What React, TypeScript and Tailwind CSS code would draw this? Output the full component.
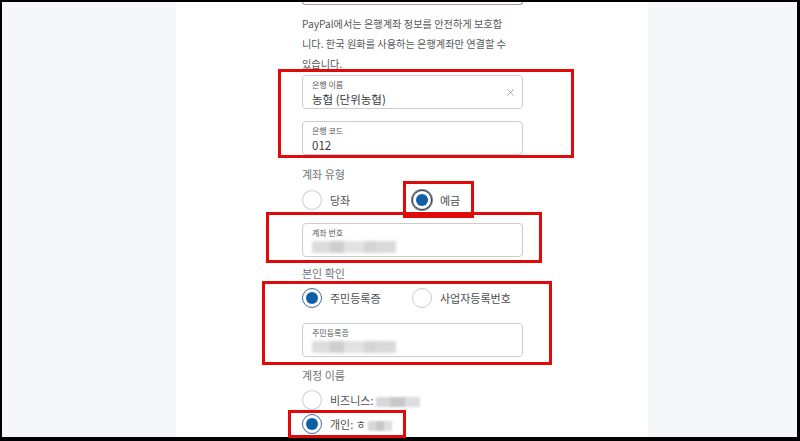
import React from "react";

const font = { fontFamily: '"Noto Sans CJK KR", "Noto Sans", sans-serif' };

function Field({ label, value, clear }: { label: string; value?: string; clear?: boolean }) {
  return (
    <div className="relative w-[221px] h-[34px] rounded-[4px] border border-[#c9cccf] bg-white pl-[9px] pt-[4px]">
      <div className="text-[8px] leading-[10px] text-[#555]">{label}</div>
      {value ? (
        <div className="mt-[2px] text-[11.5px] leading-[14px] text-[#3a3c3e]">{value}</div>
      ) : (
        <Blur />
      )}
      {clear && (
        <svg className="absolute right-[8px] top-[13px]" width="7" height="7" viewBox="0 0 7 7">
          <path d="M0.5 0.5L6.5 6.5M6.5 0.5L0.5 6.5" stroke="#9aa0a4" strokeWidth="0.9" />
        </svg>
      )}
    </div>
  );
}

function Blur() {
  return (
    <div className="mt-[3px] flex h-[12px] w-[84px] blur-[1.5px]">
      <div className="w-[18px] bg-[#dcdcdc]" />
      <div className="w-[14px] bg-[#cecece]" />
      <div className="w-[20px] bg-[#e2e2e2]" />
      <div className="w-[12px] bg-[#d4d4d4]" />
      <div className="w-[20px] bg-[#dadada]" />
    </div>
  );
}

function Radio({ checked, dark }: { checked?: boolean; dark?: boolean }) {
  if (!checked)
    return <div className="h-[20px] w-[20px] shrink-0 rounded-full border border-[#c7c9cc] bg-white" />;
  return (
    <div
      className={
        "flex h-[20px] w-[20px] shrink-0 items-center justify-center rounded-full border-[1.5px] bg-white " +
        (dark ? "border-[#2b3542] shadow-[0_0_0_1px_#7d8590]" : "border-[#3a6fa3]")
      }
    >
      <div className="h-[12px] w-[12px] rounded-full bg-[#0f5fa8]" />
    </div>
  );
}

function Option({ checked, dark, children }: { checked?: boolean; dark?: boolean; children: React.ReactNode }) {
  return (
    <div className="flex w-[110px] items-center gap-[8px]">
      <Radio checked={checked} dark={dark} />
      <span className="text-[11px] leading-[14px] text-[#4d4f51]">{children}</span>
    </div>
  );
}

function SmallBlur({ w }: { w: number }) {
  return (
    <span className="ml-[2px] inline-flex h-[10px] blur-[1px] align-middle" style={{ width: w }}>
      <span className="flex-1 bg-[#d8d8d8]" />
      <span className="flex-1 bg-[#c8c8c8]" />
      <span className="flex-1 bg-[#dedede]" />
    </span>
  );
}

export default function App() {
  return (
    <div className="relative h-[441px] w-[800px] bg-black pb-[4px] pl-[2px] pr-[3px] pt-[2px]" style={font}>
      <div className="flex h-full w-full">
        <div className="w-[174px] bg-[#f5f7fa]" />
        <div className="w-[472px] bg-white pl-[126px]">
          <div className="h-[3px] w-[221px] rounded-b-[4px] border border-t-0 border-[#b59597]" />
          <p className="mt-[9px] text-[10.2px] leading-[20px] text-[#555859]">
            PayPal에서는 은행계좌 정보를 안전하게 보호합
            <br />
            니다. 한국 원화를 사용하는 은행계좌만 연결할 수
            <br />
            있습니다.
          </p>
          <div className="mt-[1px]">
            <Field label="은행 이름" value="농협 (단위농협)" clear />
          </div>
          <div className="mt-[12px]">
            <Field label="은행 코드" value="012" />
          </div>
          <div className="mt-[12px] text-[11px] leading-[14px] text-[#6c7378]">계좌 유형</div>
          <div className="mt-[9px] flex">
            <Option>당좌</Option>
            <Option checked dark>
              예금
            </Option>
          </div>
          <div className="mt-[13px]">
            <Field label="계좌 번호" />
          </div>
          <div className="mt-[9px] text-[11px] leading-[14px] text-[#6c7378]">본인 확인</div>
          <div className="mt-[8px] flex">
            <Option checked>주민등록증</Option>
            <Option>사업자등록번호</Option>
          </div>
          <div className="mt-[15px]">
            <Field label="주민등록증" />
          </div>
          <div className="mt-[11px] text-[11px] leading-[14px] text-[#6c7378]">계정 이름</div>
          <div className="mt-[8px] flex items-center gap-[8px]">
            <Radio />
            <span className="text-[11px] leading-[14px] text-[#4d4f51]">
              비즈니스:
              <SmallBlur w={44} />
            </span>
          </div>
          <div className="mt-[4px] flex items-center gap-[8px]">
            <Radio checked />
            <span className="text-[11px] leading-[14px] text-[#4d4f51]">
              개인: ㅎ
              <SmallBlur w={24} />
            </span>
          </div>
        </div>
        <div className="flex-1 bg-[#f5f7fa]" />
      </div>

      {/* red annotation boxes */}
      <div className="pointer-events-none absolute left-[278px] top-[69px] h-[89px] w-[296px] border-[3px] border-[#e00a0a]" />
      <div className="pointer-events-none absolute left-[403px] top-[181px] h-[37px] w-[71px] border-[3px] border-[#e00a0a]" />
      <div className="pointer-events-none absolute left-[266px] top-[212px] h-[51px] w-[276px] border-[3px] border-[#e00a0a]" />
      <div className="pointer-events-none absolute left-[262px] top-[281px] h-[84px] w-[290px] border-[3px] border-[#e00a0a]" />
      <div className="pointer-events-none absolute left-[288px] top-[410px] h-[28px] w-[118px] border-[3px] border-[#e00a0a]" />
    </div>
  );
}
